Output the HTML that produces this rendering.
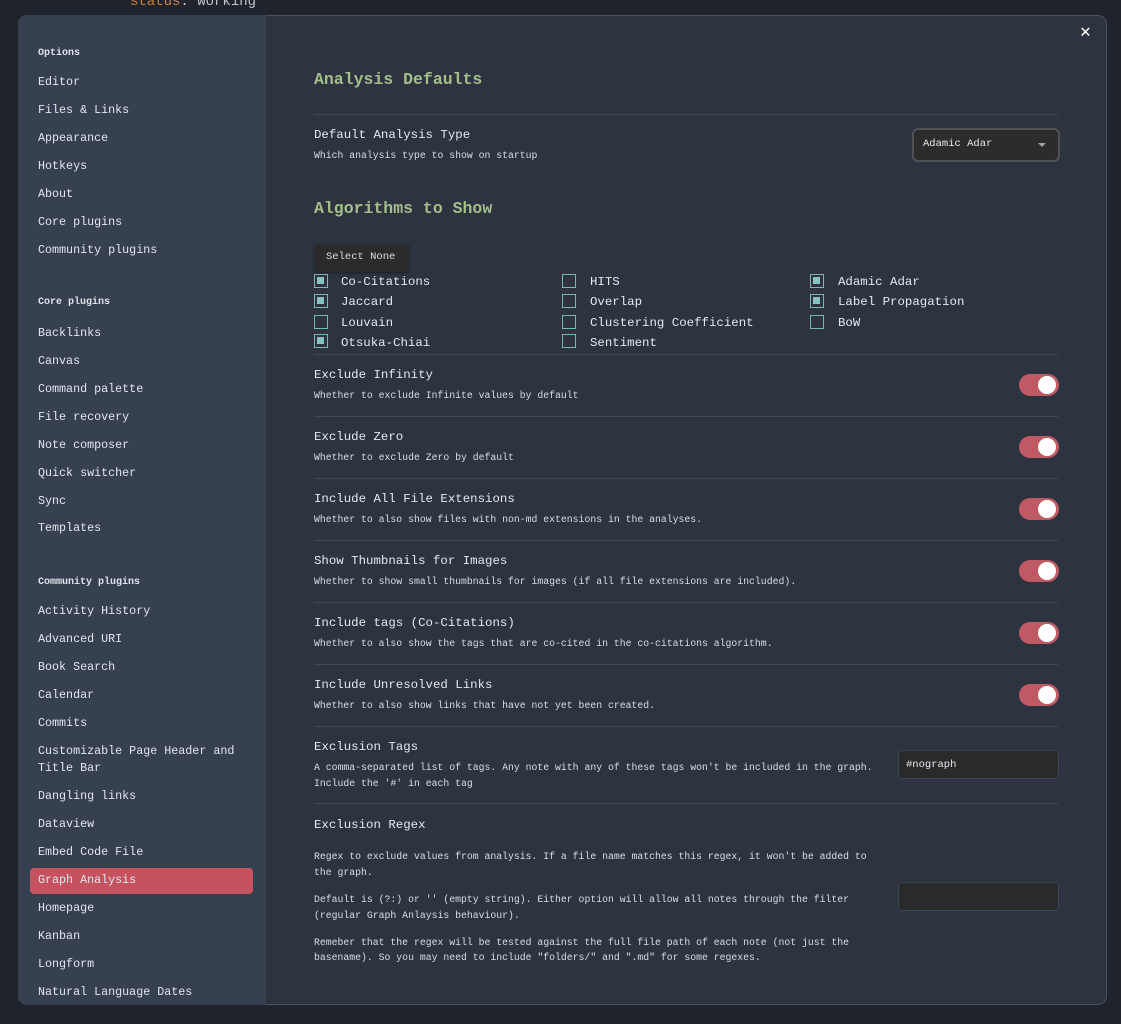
<!DOCTYPE html>
<html><head><meta charset="utf-8">
<style>
*{margin:0;padding:0;box-sizing:border-box}
html,body{width:1121px;height:1024px;overflow:hidden;background:#1f232b;font-family:"Liberation Mono",monospace;color:#d8dee9}
.a{position:absolute;white-space:nowrap}
.modal{position:absolute;left:18px;top:15px;width:1089px;height:990px;border-radius:9px;background:#2d333f;box-shadow:inset 0 0 0 1px #4a5161;overflow:hidden}
.side{position:absolute;left:0;top:0;width:248px;height:100%;background:#374050;border-radius:9px 0 0 9px}
.si{position:absolute;left:20px;font-size:11.7px;line-height:14px;color:#e2e6ee}
.sh{position:absolute;left:20px;font-size:10px;line-height:12px;font-weight:bold;color:#dfe3ea}
.h{font-size:16.5px;color:#a3be8c;line-height:20px;font-weight:bold}
.n{font-size:12.4px;line-height:15px;color:#e5e9f0}
.d{font-size:9.8px;line-height:12px;color:#d8dee9}
.sep{position:absolute;left:296px;width:744px;height:1px;background:#3e4858}
.tg{position:absolute;left:1001px;width:40px;height:22px;border-radius:11px;background:#bf5a65}
.tg::after{content:"";position:absolute;right:3px;top:2px;width:18px;height:18px;border-radius:50%;background:#fff}
.cb{position:absolute;width:14px;height:14px;border:1.5px solid #79b7b4}
.cb.on::after{content:"";position:absolute;left:2px;top:2px;width:7px;height:7px;background:#86c3c0}
.cl{font-size:12.4px;line-height:15px;color:#e5e9f0}
.inp{position:absolute;background:#2a2a2b;border:1px solid #3b4454;border-radius:4px}
</style></head><body>
<div class="a" style="left:130px;top:-6px;font-size:14px;line-height:16px;color:#c9823f">status<span style="color:#c0c4cc">: working</span></div>
<div class="modal">
<div class="side">
<div class="sh" style="top:33px">Options</div>
<div class="si" style="top:60px">Editor</div>
<div class="si" style="top:88px">Files &amp; Links</div>
<div class="si" style="top:116px">Appearance</div>
<div class="si" style="top:144px">Hotkeys</div>
<div class="si" style="top:172px">About</div>
<div class="si" style="top:200px">Core plugins</div>
<div class="si" style="top:228px">Community plugins</div>
<div class="sh" style="top:282px">Core plugins</div>
<div class="si" style="top:311px">Backlinks</div>
<div class="si" style="top:339px">Canvas</div>
<div class="si" style="top:367px">Command palette</div>
<div class="si" style="top:395px">File recovery</div>
<div class="si" style="top:423px">Note composer</div>
<div class="si" style="top:451px">Quick switcher</div>
<div class="si" style="top:479px">Sync</div>
<div class="si" style="top:506px">Templates</div>
<div class="sh" style="top:562px">Community plugins</div>
<div class="si" style="top:589px">Activity History</div>
<div class="si" style="top:617px">Advanced URI</div>
<div class="si" style="top:645px">Book Search</div>
<div class="si" style="top:673px">Calendar</div>
<div class="si" style="top:701px">Commits</div>
<div class="si" style="top:729px">Customizable Page Header and</div>
<div class="si" style="top:746px">Title Bar</div>
<div class="si" style="top:774px">Dangling links</div>
<div class="si" style="top:802px">Dataview</div>
<div class="si" style="top:830px">Embed Code File</div>
<div style="position:absolute;left:12px;top:853px;width:223px;height:26px;border-radius:4px;background:#c4535f"></div>
<div class="si" style="top:858px">Graph Analysis</div>
<div class="si" style="top:886px">Homepage</div>
<div class="si" style="top:914px">Kanban</div>
<div class="si" style="top:942px">Longform</div>
<div class="si" style="top:970px">Natural Language Dates</div>
</div>
<div class="a" style="left:1062px;top:6px;font-size:18px;color:#fff;font-weight:bold">✕</div>

<div class="a h" style="left:296px;top:55px">Analysis Defaults</div>
<div class="sep" style="top:99px"></div>
<div class="a n" style="left:296px;top:113px">Default Analysis Type</div>
<div class="a d" style="left:296px;top:135px">Which analysis type to show on startup</div>
<div style="position:absolute;left:894px;top:113px;width:148px;height:34px;border:2px solid #4f5257;border-radius:6px;background:#2c2c2d"></div>
<div class="a" style="left:905px;top:123px;font-size:10.5px;color:#e5e9f0;line-height:13px">Adamic Adar</div>
<div class="a" style="left:1020px;top:124px;width:0;height:0;border-left:4px solid transparent;border-right:4px solid transparent;border-top:4px solid #9aa0a8;margin-top:4px"></div>

<div class="a h" style="left:296px;top:184px">Algorithms to Show</div>
<div style="position:absolute;left:296px;top:229px;width:95px;height:28px;border-radius:4px;background:#2b2b2c;box-shadow:0 1px 2px rgba(0,0,0,.4)"></div>
<div class="a" style="left:308px;top:236px;font-size:10.5px;line-height:13px;color:#dcdcdc">Select None</div>

<div class="cb on" style="left:296px;top:259px"></div><div class="a cl" style="left:323px;top:260px">Co-Citations</div>
<div class="cb on" style="left:296px;top:279px"></div><div class="a cl" style="left:323px;top:280px">Jaccard</div>
<div class="cb" style="left:296px;top:300px"></div><div class="a cl" style="left:323px;top:301px">Louvain</div>
<div class="cb on" style="left:296px;top:319px"></div><div class="a cl" style="left:323px;top:321px">Otsuka-Chiai</div>
<div class="cb" style="left:544px;top:259px"></div><div class="a cl" style="left:572px;top:260px">HITS</div>
<div class="cb" style="left:544px;top:279px"></div><div class="a cl" style="left:572px;top:280px">Overlap</div>
<div class="cb" style="left:544px;top:300px"></div><div class="a cl" style="left:572px;top:301px">Clustering Coefficient</div>
<div class="cb" style="left:544px;top:319px"></div><div class="a cl" style="left:572px;top:321px">Sentiment</div>
<div class="cb on" style="left:792px;top:259px"></div><div class="a cl" style="left:820px;top:260px">Adamic Adar</div>
<div class="cb on" style="left:792px;top:279px"></div><div class="a cl" style="left:820px;top:280px">Label Propagation</div>
<div class="cb" style="left:792px;top:300px"></div><div class="a cl" style="left:820px;top:301px">BoW</div>

<div class="sep" style="top:339px"></div>
<div class="a n" style="left:296px;top:353px">Exclude Infinity</div>
<div class="a d" style="left:296px;top:375px">Whether to exclude Infinite values by default</div>
<div class="tg" style="top:359px"></div>
<div class="sep" style="top:401px"></div>
<div class="a n" style="left:296px;top:415px">Exclude Zero</div>
<div class="a d" style="left:296px;top:437px">Whether to exclude Zero by default</div>
<div class="tg" style="top:421px"></div>
<div class="sep" style="top:463px"></div>
<div class="a n" style="left:296px;top:477px">Include All File Extensions</div>
<div class="a d" style="left:296px;top:499px">Whether to also show files with non-md extensions in the analyses.</div>
<div class="tg" style="top:483px"></div>
<div class="sep" style="top:525px"></div>
<div class="a n" style="left:296px;top:539px">Show Thumbnails for Images</div>
<div class="a d" style="left:296px;top:561px">Whether to show small thumbnails for images (if all file extensions are included).</div>
<div class="tg" style="top:545px"></div>
<div class="sep" style="top:587px"></div>
<div class="a n" style="left:296px;top:601px">Include tags (Co-Citations)</div>
<div class="a d" style="left:296px;top:623px">Whether to also show the tags that are co-cited in the co-citations algorithm.</div>
<div class="tg" style="top:607px"></div>
<div class="sep" style="top:649px"></div>
<div class="a n" style="left:296px;top:663px">Include Unresolved Links</div>
<div class="a d" style="left:296px;top:685px">Whether to also show links that have not yet been created.</div>
<div class="tg" style="top:669px"></div>
<div class="sep" style="top:711px"></div>
<div class="a n" style="left:296px;top:725px">Exclusion Tags</div>
<div class="a d" style="left:296px;top:747px">A comma-separated list of tags. Any note with any of these tags won't be included in the graph.</div>
<div class="a d" style="left:296px;top:763px">Include the '#' in each tag</div>
<div class="inp" style="left:880px;top:735px;width:161px;height:29px"></div>
<div class="a" style="left:888px;top:744px;font-size:10.5px;line-height:12px;color:#e5e9f0">#nograph</div>
<div class="sep" style="top:788px"></div>
<div class="a n" style="left:296px;top:803px">Exclusion Regex</div>
<div class="a d" style="left:296px;top:836px">Regex to exclude values from analysis. If a file name matches this regex, it won't be added to</div>
<div class="a d" style="left:296px;top:852px">the graph.</div>
<div class="a d" style="left:296px;top:879px">Default is (?:) or '' (empty string). Either option will allow all notes through the filter</div>
<div class="a d" style="left:296px;top:895px">(regular Graph Anlaysis behaviour).</div>
<div class="a d" style="left:296px;top:922px">Remeber that the regex will be tested against the full file path of each note (not just the</div>
<div class="a d" style="left:296px;top:937px">basename). So you may need to include "folders/" and ".md" for some regexes.</div>
<div class="inp" style="left:880px;top:867px;width:161px;height:29px"></div>
</div>
</body></html>
